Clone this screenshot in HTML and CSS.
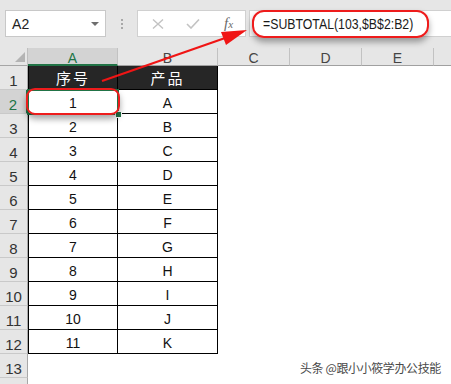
FILE: index.html
```html
<!DOCTYPE html>
<html lang="zh">
<head>
<meta charset="utf-8">
<link rel="stylesheet" href="styles.css">
</head>
<body>
<div class="app">
  <div class="toolbar">
    <div class="namebox"><span class="ref">A2</span><span class="drop"></span></div>
    <div class="grip"><i></i><i></i><i></i></div>
    <div class="fxbox">
      <svg class="ico" width="12" height="10" viewBox="0 0 12 10"><path d="M1 0.5 L11 9.5 M11 0.5 L1 9.5" stroke="#c3c3c3" stroke-width="1.4" fill="none"/></svg>
      <svg class="ico" width="14" height="10" viewBox="0 0 14 10"><path d="M1 5 L5 9 L13 0.5" stroke="#c3c3c3" stroke-width="1.6" fill="none"/></svg>
      <span class="fx">f<span class="fxx">x</span></span>
    </div>
    <div class="formula"><span class="ftext">=SUBTOTAL(103,$B$2:B2)</span></div>
  </div>

  <div class="sheet">
    <div class="corner"><span class="tri"></span></div>
    <div class="ch sel">A</div><div class="ch">B</div><div class="ch">C</div><div class="ch">D</div><div class="ch">E</div><div class="ch last"></div>

    <div class="rh">1</div><div class="c h a">序号</div><div class="c h">产品</div><div class="e"></div><div class="e"></div><div class="e"></div><div class="e"></div>
    <div class="rh selr">2</div><div class="c a">1</div><div class="c">A</div><div class="e"></div><div class="e"></div><div class="e"></div><div class="e"></div>
    <div class="rh">3</div><div class="c a">2</div><div class="c">B</div><div class="e"></div><div class="e"></div><div class="e"></div><div class="e"></div>
    <div class="rh">4</div><div class="c a">3</div><div class="c">C</div><div class="e"></div><div class="e"></div><div class="e"></div><div class="e"></div>
    <div class="rh">5</div><div class="c a">4</div><div class="c">D</div><div class="e"></div><div class="e"></div><div class="e"></div><div class="e"></div>
    <div class="rh">6</div><div class="c a">5</div><div class="c">E</div><div class="e"></div><div class="e"></div><div class="e"></div><div class="e"></div>
    <div class="rh">7</div><div class="c a">6</div><div class="c">F</div><div class="e"></div><div class="e"></div><div class="e"></div><div class="e"></div>
    <div class="rh">8</div><div class="c a">7</div><div class="c">G</div><div class="e"></div><div class="e"></div><div class="e"></div><div class="e"></div>
    <div class="rh">9</div><div class="c a">8</div><div class="c">H</div><div class="e"></div><div class="e"></div><div class="e"></div><div class="e"></div>
    <div class="rh">10</div><div class="c a">9</div><div class="c">I</div><div class="e"></div><div class="e"></div><div class="e"></div><div class="e"></div>
    <div class="rh">11</div><div class="c a">10</div><div class="c">J</div><div class="e"></div><div class="e"></div><div class="e"></div><div class="e"></div>
    <div class="rh">12</div><div class="c a">11</div><div class="c">K</div><div class="e"></div><div class="e"></div><div class="e"></div><div class="e"></div>
    <div class="rh">13</div><div class="e"></div><div class="e"></div><div class="e"></div><div class="e"></div><div class="e"></div><div class="e"></div>
    <div class="rh"></div><div class="e"></div><div class="e"></div><div class="e"></div><div class="e"></div><div class="e"></div><div class="e"></div>
  </div>

  <div class="selbox"><span class="handle"></span></div>
  <div class="mark mark-cell"></div>
  <div class="mark mark-formula"></div>

  <svg class="arrow" width="451" height="384" viewBox="0 0 451 384">
    <line x1="102" y1="81" x2="228" y2="37" stroke="#f01515" stroke-width="2.2"/>
    <polygon points="247,30 221,32 226,45" fill="#f01515"/>
  </svg>

  <div class="watermark">头条 @跟小小筱学办公技能</div>
</div>
</body>
</html>
```

FILE: styles.css
```css
html, body {
  margin: 0;
  padding: 0;
  background: #ffffff;
}

.app {
  position: relative;
  width: 451px;
  height: 384px;
  overflow: hidden;
  font-family: "Liberation Sans", Arial, sans-serif;
}

.toolbar {
  height: 48px;
  box-sizing: border-box;
  padding-top: 10px;
  background: #e6e6e6;
  display: flex;
  align-items: flex-start;
}

.namebox {
  margin-left: 5px;
  width: 101px;
  height: 27px;
  box-sizing: border-box;
  border: 1px solid #c8c8c8;
  background: #fff;
  display: flex;
  align-items: center;
  justify-content: space-between;
  padding: 0 6px 0 6px;
}

.ref {
  font-size: 14px;
  color: #222;
  letter-spacing: 0.2px;
}

.drop {
  width: 0;
  height: 0;
  border-left: 4px solid transparent;
  border-right: 4px solid transparent;
  border-top: 4px solid #6e6e6e;
}

.grip {
  width: 31px;
  height: 27px;
  display: flex;
  flex-direction: column;
  align-items: center;
  justify-content: center;
  gap: 2px;
}

.grip i {
  display: block;
  width: 2px;
  height: 2px;
  background: #a8a8a8;
}

.fxbox {
  width: 109px;
  height: 27px;
  box-sizing: border-box;
  border: 1px solid #d0d0d0;
  background: #fff;
  display: flex;
  align-items: center;
  padding-left: 14px;
  gap: 22px;
}

.fx {
  font-family: "Liberation Serif", serif;
  font-style: italic;
  font-size: 15px;
  color: #6a6a6a;
  margin-left: 2px;
}

.fxx {
  font-size: 11px;
}

.formula {
  margin-left: 3px;
  flex: 1;
  height: 27px;
  box-sizing: border-box;
  border: 1px solid #d0d0d0;
  border-right: none;
  background: #fff;
  display: flex;
  align-items: center;
  padding-left: 13px;
  overflow: hidden;
}

.ftext {
  display: inline-block;
  font-size: 15px;
  color: #1a1a1a;
  white-space: nowrap;
  transform: scaleX(0.82);
  transform-origin: left center;
}

.sheet {
  display: grid;
  grid-template-columns: 28px 90px 100px 72px 72px 72px 17px;
  grid-template-rows: 18px;
  grid-auto-rows: 24px;
}

.corner {
  background: #e6e6e6;
  border-right: 1px solid #bfbfbf;
  border-bottom: 1px solid #a6a6a6;
  box-sizing: border-box;
  position: relative;
}

.tri {
  position: absolute;
  right: 2px;
  bottom: 3px;
  width: 0;
  height: 0;
  border-left: 10px solid transparent;
  border-bottom: 10px solid #b4b4b4;
}

.ch {
  background: #e6e6e6;
  border-right: 1px solid #c2c2c2;
  border-bottom: 1px solid #a0a0a0;
  box-sizing: border-box;
  text-align: center;
  font-size: 14px;
  line-height: 18px;
  padding-top: 1px;
  color: #444;
}

.ch.sel {
  background: #d3d3d3;
  border-bottom: 2px solid #217346;
  color: #217346;
}

.ch.last {
  border-right: none;
}

.rh {
  background: #e6e6e6;
  border-right: 1px solid #a8a8a8;
  border-bottom: 1px solid #c9c9c9;
  box-sizing: border-box;
  text-align: center;
  font-size: 15px;
  line-height: 16px;
  padding-top: 7px;
  color: #333;
}

.rh.selr {
  background: #d3d3d3;
  border-right: 2px solid #217346;
  color: #217346;
}

.c {
  box-sizing: border-box;
  border-right: 1px solid #000;
  border-bottom: 1px solid #000;
  background: #fff;
  text-align: center;
  font-size: 14px;
  line-height: 16px;
  padding-top: 5px;
  color: #111;
}

.c.a {
  border-left: 1px solid #000;
}

.c.h {
  background: #262626;
  color: #fff;
  font-family: "Noto Sans CJK SC", sans-serif;
  font-size: 15px;
  letter-spacing: 2px;
  line-height: 18px;
  padding-top: 3px;
}

.e {
  background: #fff;
}

.selbox {
  position: absolute;
  left: 27px;
  top: 89px;
  width: 92px;
  height: 26px;
  box-sizing: border-box;
  border: 2px solid #217346;
}

.handle {
  position: absolute;
  right: -5px;
  bottom: -5px;
  width: 5px;
  height: 5px;
  background: #217346;
  border: 1px solid #fff;
}

.mark {
  position: absolute;
  box-sizing: border-box;
  border: 2px solid #ee1c1c;
  box-shadow: 0 4px 6px rgba(0, 0, 0, 0.35);
}

.mark-cell {
  left: 26px;
  top: 88px;
  width: 94px;
  height: 27px;
  border-radius: 9px;
}

.mark-formula {
  left: 252px;
  top: 10px;
  width: 177px;
  height: 28px;
  border-radius: 12px;
}

.arrow {
  position: absolute;
  left: 0;
  top: 0;
}

.watermark {
  position: absolute;
  left: 300px;
  top: 360px;
  white-space: nowrap;
  font-family: "Noto Sans CJK SC", sans-serif;
  font-size: 12px;
  line-height: 16px;
  color: #4a4a4a;
  letter-spacing: -0.4px;
}
```
